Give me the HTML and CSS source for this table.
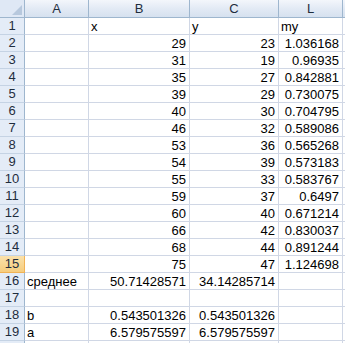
FILE: index.html
```html
<!DOCTYPE html>
<html lang="en">
<head>
    <meta charset="UTF-8">
    <title>Sheet</title>
    <link rel="stylesheet" href="styles.css">
</head>
<body>
    <div class="sheet" id="sheet">
        <div class="corner"><span class="tri"></span></div>
        <div class="colhead">A</div>
        <div class="colhead">B</div>
        <div class="colhead">C</div>
        <div class="colhead">L</div>
        <div class="colhead"></div>
    </div>

    <script>
        const sheet = document.getElementById('sheet');

        // each row: [A, B, C, L], numbers go right, text left
        const rows = [
            ['', 'x', 'y', 'my'],
            ['', 29, 23, '1.036168'],
            ['', 31, 19, '0.96935'],
            ['', 35, 27, '0.842881'],
            ['', 39, 29, '0.730075'],
            ['', 40, 30, '0.704795'],
            ['', 46, 32, '0.589086'],
            ['', 53, 36, '0.565268'],
            ['', 54, 39, '0.573183'],
            ['', 55, 33, '0.583767'],
            ['', 59, 37, '0.6497'],
            ['', 60, 40, '0.671214'],
            ['', 66, 42, '0.830037'],
            ['', 68, 44, '0.891244'],
            ['', 75, 47, '1.124698'],
            ['среднее', '50.71428571', '34.14285714', ''],
            ['', '', '', ''],
            ['b', '0.543501326', '0.543501326', ''],
            ['a', '6.579575597', '6.579575597', ''],
            ['', '', '', '']
        ];

        function isNum(v) {
            return v !== '' && !isNaN(Number(v));
        }

        rows.forEach((row, i) => {
            const head = document.createElement('div');
            head.className = 'rowhead' + (i === 14 ? ' selected' : '');
            // last row is only a sliver at the bottom edge
            head.textContent = i < 19 ? i + 1 : '';
            sheet.appendChild(head);

            row.concat(['']).forEach(value => {
                const cell = document.createElement('div');
                cell.className = 'cell' + (isNum(value) ? ' num' : '');
                cell.textContent = value;
                sheet.appendChild(cell);
            });
        });
    </script>
</body>
</html>
```

FILE: styles.css
```css
body {
    margin: 0;
    padding: 0;
    background: #ffffff;
    font-family: "Liberation Sans", Arial, sans-serif;
    font-size: 13px;
    color: #000000;
    overflow: hidden;
}

.sheet {
    display: grid;
    grid-template-columns: 25px 64px 101px 89px 64px 1fr;
    grid-template-rows: 18px;
    grid-auto-rows: 17px;
    width: 345px;
}

.sheet > div {
    box-sizing: border-box;
    border-right: 1px solid #d0d7e5;
    border-bottom: 1px solid #d0d7e5;
    white-space: nowrap;
    overflow: hidden;
}

.corner {
    position: relative;
    background: #dfe8f5;
    border-right-color: #9eb6ce !important;
    border-bottom-color: #9eb6ce !important;
}

.tri {
    position: absolute;
    right: 2px;
    bottom: 2px;
    width: 0;
    height: 0;
    border-left: 10px solid transparent;
    border-bottom: 10px solid #b7c8dd;
}

.colhead {
    background: linear-gradient(#f3f6fb, #e1e9f4 55%, #d6e1ef);
    border-right-color: #9eb6ce !important;
    border-bottom-color: #9eb6ce !important;
    text-align: center;
    line-height: 17px;
    color: #1f2d3d;
}

.rowhead {
    background: #e4ecf7;
    border-right-color: #9eb6ce !important;
    border-bottom-color: #c5d3e4 !important;
    text-align: center;
    line-height: 16px;
    color: #1f2d3d;
}

.rowhead.selected {
    background: linear-gradient(#fae1ab, #f6cd7e);
    border-bottom-color: #f0b255 !important;
    border-right-color: #f0b255 !important;
}

.cell {
    padding: 1px 3px 0 2px;
    line-height: 15px;
}

.num {
    text-align: right;
}
```
